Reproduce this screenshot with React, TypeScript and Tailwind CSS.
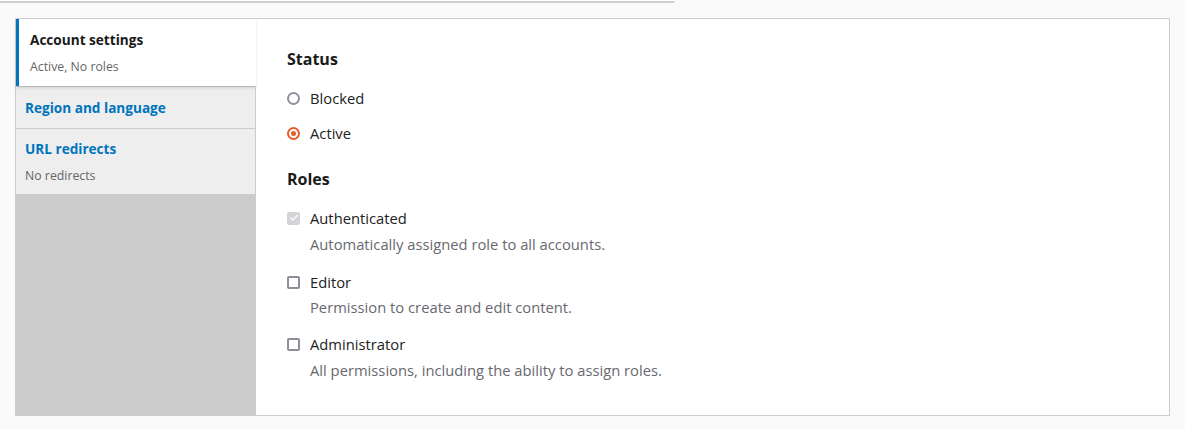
import { Check } from "lucide-react";

const font = { fontFamily: '"Open Sans", "Noto Sans", sans-serif' };

function Radio({ checked, label }: { checked?: boolean; label: string }) {
  return (
    <label className="flex items-center h-[20px] text-[14.75px] leading-[20px] text-[#222]">
      <span
        className={
          checked
            ? "w-[13px] h-[13px] rounded-full border-2 border-[#e65c2b] flex items-center justify-center"
            : "w-[13px] h-[13px] rounded-full border-2 border-[#8e929c]"
        }
      >
        {checked && <span className="w-[5px] h-[5px] rounded-full bg-[#e65c2b]" />}
      </span>
      <span className="ml-[10px]">{label}</span>
    </label>
  );
}

function Role({
  label,
  desc,
  disabled,
  className,
  descClass,
}: {
  label: string;
  desc: string;
  disabled?: boolean;
  className?: string;
  descClass?: string;
}) {
  return (
    <div className={className}>
      <label className="flex items-center h-[20px] text-[14.75px] leading-[20px] text-[#222]">
        {disabled ? (
          <span className="w-[13px] h-[13px] rounded-[2px] bg-[#d4d4d8] flex items-center justify-center">
            <Check className="w-[10px] h-[10px] text-white" strokeWidth={3} />
          </span>
        ) : (
          <span className="w-[13px] h-[13px] rounded-[2px] border-2 border-[#8e8e9a]" />
        )}
        <span className="ml-[10px]">{label}</span>
      </label>
      <p className={"ml-[23px] text-[14.75px] leading-[20px] text-[#68696f] " + descClass}>{desc}</p>
    </div>
  );
}

export default function App() {
  return (
    <div className="min-h-screen bg-[#fafafa]" style={font}>
      <div className="w-[675px] h-[3px] bg-white border-b-2 border-[#cfcfcf] rounded-br-[2px]" />
      <div className="mx-[15px] mt-[15px] flex border border-[#ccc] bg-white">
        {/* vertical tabs */}
        <div className="w-[240px] shrink-0 bg-[#ccc] flex flex-col">
          <div className="relative z-10 bg-white border-l-[3px] border-[#0074bd] pl-[11px] pt-[11px] pb-[10px] shadow-[0_2px_3px_rgba(0,0,0,0.12)]">
            <div className="text-[13.6px] leading-[20px] font-bold text-[#1a1a1a]">Account settings</div>
            <div className="mt-[8px] text-[12.3px] leading-[18px] text-[#666]">Active, No roles</div>
          </div>
          <div className="bg-[#eee] border-y border-r border-[#ccc] pl-[9px] pt-[11px] pb-[10px]">
            <div className="text-[13.6px] leading-[20px] font-bold text-[#0074bd]">Region and language</div>
          </div>
          <div className="bg-[#eee] border-b border-r border-[#ccc] pl-[9px] pt-[10px] pb-[9px]">
            <div className="text-[13.6px] leading-[20px] font-bold text-[#0074bd]">URL redirects</div>
            <div className="mt-[8px] text-[12.3px] leading-[18px] text-[#666]">No redirects</div>
          </div>
        </div>

        {/* panel */}
        <div className="flex-1 pl-[31px] pt-[28px] pb-[35px]">
          <h2 className="text-[16px] leading-[24px] font-bold text-[#1a1a1a]">Status</h2>
          <div className="mt-[17px]">
            <Radio label="Blocked" />
          </div>
          <div className="mt-[15px]">
            <Radio checked label="Active" />
          </div>
          <h2 className="mt-[24px] text-[16px] leading-[24px] font-bold text-[#1a1a1a]">Roles</h2>
          <Role
            className="mt-[17px]"
            descClass="mt-[6px]"
            disabled
            label="Authenticated"
            desc="Automatically assigned role to all accounts."
          />
          <Role
            className="mt-[18px]"
            descClass="mt-[5px]"
            label="Editor"
            desc="Permission to create and edit content."
          />
          <Role
            className="mt-[17px]"
            descClass="mt-[6px]"
            label="Administrator"
            desc="All permissions, including the ability to assign roles."
          />
        </div>
      </div>
    </div>
  );
}
